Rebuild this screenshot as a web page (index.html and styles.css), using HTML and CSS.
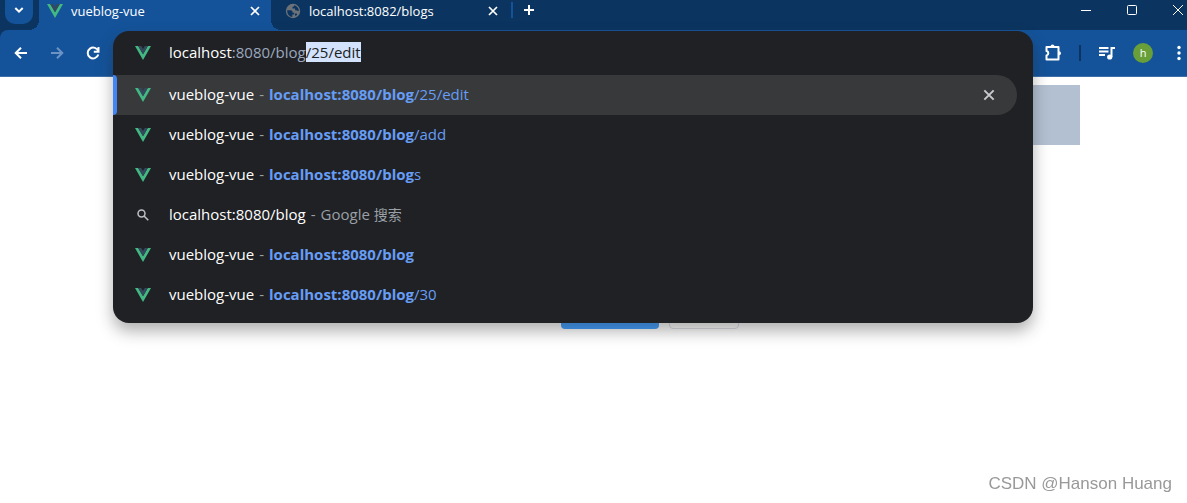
FILE: index.html
```html
<!DOCTYPE html>
<html lang="zh-CN">
<head>
<meta charset="utf-8">
<meta name="viewport" content="width=device-width, initial-scale=1">
<title>vueblog-vue</title>
<link rel="stylesheet" href="styles.css">
</head>
<body>
<svg class="defs" width="0" height="0" aria-hidden="true">
  <symbol id="vue" viewBox="0 0 16 14"><path fill="#42b883" d="M0 0h3.2L8 8.3 12.8 0H16L8 14z"/><path fill="#35495e" d="M3.2 0h3L8 3.1 9.8 0h3L8 8.3z"/></symbol>
  <symbol id="close" viewBox="0 0 12 12"><path fill="none" stroke="currentColor" stroke-width="1.7" d="M2 2l8 8M10 2l-8 8"/></symbol>
</svg>

<header class="browser">
  <nav class="tabstrip" aria-label="Tabs">
    <button class="tab-search" aria-label="Search tabs"><svg width="12" height="12" viewBox="0 0 12 12"><path class="line" d="M2.3 4l3.7 3.7L9.7 4"/></svg></button>
    <div class="tab tab-active">
      <svg class="favicon" width="16" height="14"><use href="#vue"/></svg>
      <span class="tab-title">vueblog-vue</span>
      <button class="tab-close" aria-label="Close tab"><svg width="12" height="12"><use href="#close"/></svg></button>
    </div>
    <div class="tab">
      <svg class="favicon" width="16" height="16" viewBox="0 0 16 16"><circle cx="8" cy="8" r="7.2" fill="#6d7278"/><path fill="#0b3560" d="M2.300 7.300h3.400c1 0 1.800.8 1.800 1.700v.8h1.700v1.600H7.300v2.700C4.500 13.700 2.200 11 2.200 8zM9.200 2.300c0 1.200-.8 1.500-1.700 1.500v1.700h2.600v1.700h1.400c.8 0 .9.800 2.300.9.100-2.700-1.800-5.100-4.600-5.800zM10 10.500h1.200c.6 0 1 .5 1 1.100l-1.400 1.400c-.6-.3-.8-.7-.8-1.300z"/></svg>
      <span class="tab-title">localhost:8082/blogs</span>
      <button class="tab-close" aria-label="Close tab"><svg width="12" height="12"><use href="#close"/></svg></button>
    </div>
    <button class="new-tab" aria-label="New tab"><svg width="12" height="12" viewBox="0 0 12 12"><path class="line" d="M6 1v10M1 6h10"/></svg></button>
    <div class="window-controls">
      <button aria-label="Minimize"><svg width="12" height="12" viewBox="0 0 12 12"><path class="thin" d="M1 6.500h10"/></svg></button>
      <button aria-label="Maximize"><svg width="12" height="12" viewBox="0 0 12 12"><rect class="thin" x="1.500" y="1.500" width="9" height="9" rx="1"/></svg></button>
      <button aria-label="Close window"><svg width="12" height="12" viewBox="0 0 12 12"><path class="thin" d="M1 1l10 10M11 1L1 11"/></svg></button>
    </div>
  </nav>

  <div class="toolbar">
    <button class="tool" aria-label="Back"><svg width="16" height="16" viewBox="0 0 16 16"><path class="line" d="M14 8H3M8 2.700L2.700 8 8 13.300"/></svg></button>
    <button class="tool tool-off" aria-label="Forward" disabled><svg width="16" height="16" viewBox="0 0 16 16"><path class="line" d="M2 8h11M8 2.700L13.300 8 8 13.300"/></svg></button>
    <button class="tool" aria-label="Reload"><svg width="16" height="16" viewBox="0 0 16 16"><path class="line" d="M13.300 6.500A5.400 5.400 0 1 0 13.300 9.500M13.500 2v4.700H8.800"/></svg></button>
    <div class="address">
      <div class="omnibox">
        <div class="field">
          <svg class="site" width="16" height="14"><use href="#vue"/></svg>
          <div class="url">
            <div class="url-parts" aria-hidden="true"><span class="host">localhost</span>:8080/blog<span class="completion">/25/edit</span></div>
            <input class="url-input" type="text" aria-label="Address" value="localhost:8080/blog/25/edit" spellcheck="false">
          </div>
        </div>
        <ul class="suggestions">
          <li class="suggestion selected"><svg class="site" width="16" height="14"><use href="#vue"/></svg><a href="#"><span>vueblog-vue</span><span class="dash">-</span><span class="link"><b>localhost:8080/blog</b>/25/edit</span></a><button class="remove" aria-label="Remove suggestion"><svg width="14" height="14" viewBox="0 0 12 12"><use href="#close"/></svg></button></li>
          <li class="suggestion"><svg class="site" width="16" height="14"><use href="#vue"/></svg><a href="#"><span>vueblog-vue</span><span class="dash">-</span><span class="link"><b>localhost:8080/blog</b>/add</span></a></li>
          <li class="suggestion"><svg class="site" width="16" height="14"><use href="#vue"/></svg><a href="#"><span>vueblog-vue</span><span class="dash">-</span><span class="link"><b>localhost:8080/blog</b>s</span></a></li>
          <li class="suggestion"><svg class="site search" width="16" height="14" viewBox="0 0 16 14"><circle cx="6.500" cy="5.500" r="3.500"/><path d="M9 8l4.300 4.300"/></svg><a href="#"><span>localhost:8080/blog</span><span class="dash">-</span><span class="muted">Google <span class="cjk">搜索</span></span></a></li>
          <li class="suggestion"><svg class="site" width="16" height="14"><use href="#vue"/></svg><a href="#"><span>vueblog-vue</span><span class="dash">-</span><span class="link"><b>localhost:8080/blog</b></span></a></li>
          <li class="suggestion"><svg class="site" width="16" height="14"><use href="#vue"/></svg><a href="#"><span>vueblog-vue</span><span class="dash">-</span><span class="link"><b>localhost:8080/blog</b>/30</span></a></li>
        </ul>
      </div>
    </div>
    <div class="actions">
      <button class="tool" aria-label="Extensions"><svg width="20" height="20" viewBox="0 0 20 20"><path class="line" stroke-linejoin="round" d="M3.500 4h12v12.500h-12v-4a2.300 2.300 0 0 0 0-4.500z"/><path fill="#fff" d="M7.500 3.500a2 2 0 0 1 4 0zM16 8.200a2 2 0 0 1 0 4z"/></svg></button>
      <span class="divider"></span>
      <button class="tool" aria-label="Media"><svg width="18" height="16" viewBox="0 0 18 16"><path class="line" d="M1 3h9.500M1 6.500h9.500M1 10h6M13.500 12V3H17"/><circle cx="11.700" cy="12" r="2.600" fill="#fff"/></svg></button>
      <button class="tool" aria-label="Profile"><span class="avatar">h</span></button>
      <button class="tool" aria-label="Menu"><svg width="16" height="16" viewBox="0 0 16 16" fill="#fff"><circle cx="8" cy="2.500" r="1.700"/><circle cx="8" cy="8" r="1.700"/><circle cx="8" cy="13.500" r="1.700"/></svg></button>
    </div>
  </div>
</header>

<main class="page">
  <div class="banner"></div>
  <form class="form">
    <button class="btn btn-primary" type="button" aria-label="Submit"></button>
    <button class="btn btn-plain" type="button" aria-label="Reset"></button>
  </form>
</main>
<p class="watermark">CSDN @Hanson Huang</p>
</body>
</html>
```
FILE: styles.css
```css
* { box-sizing: border-box; }

body {
  margin: 0;
  min-height: 100vh;
  overflow: hidden;
  background: #fff;
  font-family: "Open Sans", "Noto Sans", "Noto Sans CJK SC", sans-serif;
}

button {
  display: flex;
  align-items: center;
  justify-content: center;
  padding: 0;
  border: 0;
  background: none;
  color: #fff;
  font: inherit;
}

svg { display: block; flex: none; }
.defs { position: absolute; }
.line { fill: none; stroke: currentColor; stroke-width: 2; }
.thin { fill: none; stroke: currentColor; stroke-width: 1; }

.browser { background: #0b3560; color: #fff; }

/* Tab strip */
.tabstrip { display: flex; height: 30px; padding-left: 5px; }

.tab-search {
  width: 28px;
  height: 24px;
  margin-right: 6px;
  padding-bottom: 4px;
  border-radius: 0 0 10px 10px;
  background: #14539a;
}

.tab {
  position: relative;
  display: flex;
  align-items: center;
  width: 232px;
  padding: 0 9px 9px 8px;
  font-size: 13px;
  line-height: 20px;
}

.tab + .tab { width: 240px; padding: 0 11px 9px 14px; }
.tab-active { background: #14539a; }

.tab-active::before,
.tab-active::after {
  content: "";
  position: absolute;
  bottom: 0;
  width: 10px;
  height: 10px;
}

.tab-active::before {
  right: 100%;
  background: radial-gradient(circle at 0 0, transparent 10px, #14539a 10px);
}

.tab-active::after {
  left: 100%;
  background: radial-gradient(circle at 100% 0, transparent 10px, #14539a 10px);
}

.favicon { margin-right: 8px; }
.tab-title { flex: 1; white-space: nowrap; }
.tab-close { width: 14px; height: 14px; }

.new-tab {
  width: 34px;
  height: 16px;
  margin-top: 2px;
  border-left: 2px solid #14539a;
}

.window-controls { display: flex; gap: 34px; margin-left: auto; padding-right: 3px; }
.window-controls button { width: 12px; height: 20px; }

/* Toolbar */
.toolbar {
  display: flex;
  align-items: center;
  height: 47px;
  padding-left: 3px;
  border-bottom: 1px solid #3f6fa9;
  border-top-left-radius: 8px;
  background: #14539a;
}

.tool { flex: none; width: 36px; height: 36px; }
.tool-off { color: #6b93c4; }

.address {
  position: relative;
  flex: 1;
  align-self: stretch;
  margin: 1px 2px 0;
}

.actions { display: flex; align-items: center; flex: none; width: 152px; }
.divider { flex: none; width: 2px; height: 16px; margin: 0 8px; background: #0b3560; }

.avatar {
  width: 20px;
  height: 20px;
  border-radius: 50%;
  background: #689f38;
  font-size: 11px;
  line-height: 20px;
}

/* Address dropdown */
.omnibox {
  position: absolute;
  z-index: 2;
  top: 0;
  left: 0;
  right: 0;
  padding-bottom: 8px;
  border-radius: 16px;
  background: #202124;
  box-shadow: 0 8px 16px rgba(32, 33, 36, 0.36);
  font-size: 15px;
  line-height: 20px;
}

.field { display: flex; align-items: center; height: 44px; padding: 0 22px; }
.site { margin-right: 18px; }
.url { position: relative; flex: 1; padding-bottom: 2px; }
.url-parts { color: #9aa8bf; white-space: nowrap; }
.host { color: #fff; }
.completion { background: #d3e3fd; color: #202124; }

.url-input {
  position: absolute;
  inset: 0;
  width: 100%;
  padding: 0;
  border: 0;
  outline: 0;
  background: none;
  color: transparent;
  caret-color: #fff;
  font: inherit;
}

.suggestions { margin: 0; padding: 0; list-style: none; }

.suggestion {
  position: relative;
  display: flex;
  align-items: center;
  height: 40px;
  margin-right: 16px;
  padding: 0 20px 0 22px;
}

.suggestion a {
  display: flex;
  flex: 1;
  padding-bottom: 2px;
  color: #fff;
  text-decoration: none;
  white-space: nowrap;
}

.selected { border-radius: 0 20px 20px 0; background: #37393b; }

.selected::before {
  content: "";
  position: absolute;
  inset: 0 auto 0 0;
  width: 4px;
  border-radius: 0 4px 4px 0;
  background: #4285f4;
}

.dash { margin: 0 5px; color: #9aa0a6; }
.link { color: #669df6; }
.muted { color: #9aa0a6; }
.cjk { font-size: 14px; }
.search { fill: none; stroke: #bdc1c6; stroke-width: 1.5; }
.remove { width: 16px; height: 16px; color: #c8cacd; }

/* Page */
.page { padding-top: 8px; }
.banner { width: 960px; height: 60px; margin: 0 107px 0 auto; background: #b3c0d1; }

.form { display: flex; justify-content: center; gap: 10px; margin-top: 144px; padding-left: 113px; }
.btn { height: 40px; border-radius: 4px; }
.btn-primary { width: 98px; background: #409eff; }
.btn-plain { width: 70px; border: 1px solid #dcdfe6; background: #fff; }

.watermark {
  position: fixed;
  right: 15px;
  bottom: 8px;
  margin: 0;
  color: #999;
  font-family: "Liberation Sans", Arial, sans-serif;
  font-size: 17px;
  line-height: 22px;
}
```
